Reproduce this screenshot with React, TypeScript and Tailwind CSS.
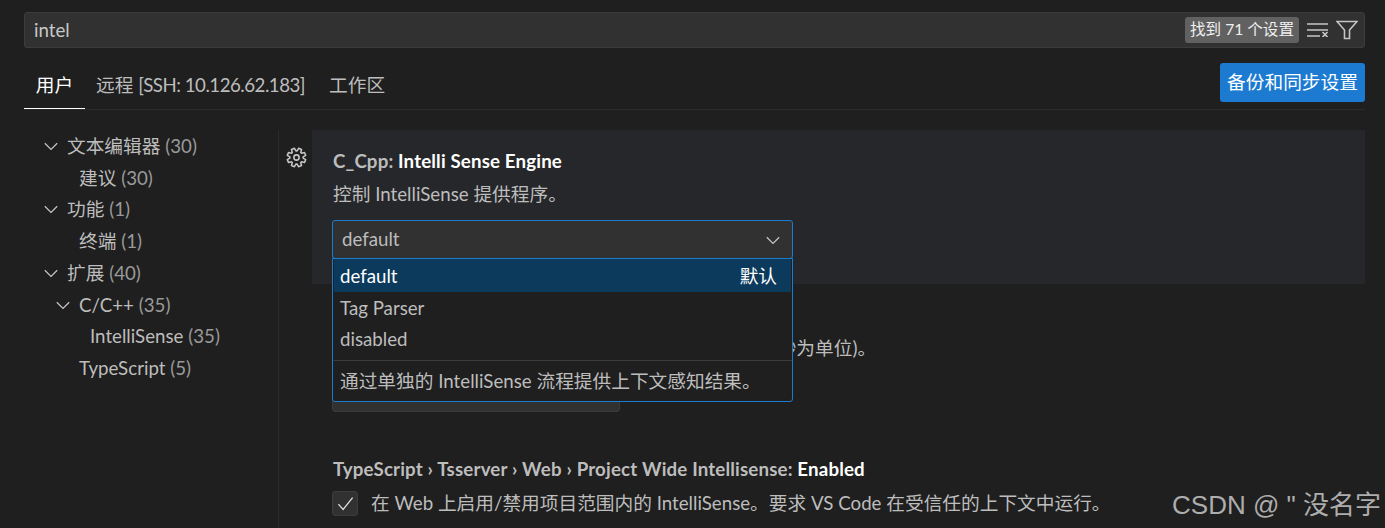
import React from 'react';

const font = "font-['Lato','Noto_Sans_CJK_SC',sans-serif]";

const tree = [
  { label: '文本编辑器', count: '(30)', depth: 0, open: true },
  { label: '建议', count: '(30)', depth: 1, open: false },
  { label: '功能', count: '(1)', depth: 0, open: true },
  { label: '终端', count: '(1)', depth: 1, open: false },
  { label: '扩展', count: '(40)', depth: 0, open: true },
  { label: 'C/C++', count: '(35)', depth: 1, open: true },
  { label: 'IntelliSense', count: '(35)', depth: 2, open: false },
  { label: 'TypeScript', count: '(5)', depth: 1, open: false },
];

const Chevron = ({ className }: { className?: string }) => (
  <svg viewBox="0 0 16 16" className={className} fill="none" stroke="currentColor" strokeWidth="1.1">
    <path d="M2.5 5.5 8 11l5.5-5.5" />
  </svg>
);

// eight lobed cog outline
const cogPath = () => {
  const pts: string[] = [];
  for (let i = 0; i < 8; i++) {
    const t = (i * Math.PI) / 4 + Math.PI / 8;
    const at = (r: number, d: number) => `${(12 + r * Math.cos(t + d)).toFixed(2)} ${(12 + r * Math.sin(t + d)).toFixed(2)}`;
    pts.push(`${i === 0 ? 'M' : 'L'}${at(7.6, -0.3)}`, `L${at(10.8, -0.17)}`, `L${at(10.8, 0.17)}`, `L${at(7.6, 0.3)}`);
  }
  return pts.join(' ') + ' Z';
};

const Gear = () => (
  <svg viewBox="0 0 24 24" className="w-[21px] h-[21px] text-[#c5c5c5]" fill="none" stroke="currentColor" strokeWidth="1.8" strokeLinejoin="round">
    <path d={cogPath()} />
    <circle cx="12" cy="12" r="3" />
  </svg>
);

const App: React.FC = () => {
  return (
    <div className={`relative w-[1385px] h-[528px] overflow-hidden bg-[#1f1f1f] text-[18.7px] text-[#bdbdbd] ${font}`}>
      <div className="pl-6 pr-5 pt-3">
        {/* search */}
        <div className="h-9 flex items-center justify-between bg-[#313131] border border-[#3c3c3c] rounded-[3px] pl-[9px] pr-[6px]">
          <span className="text-[#c8c8c8]">intel</span>
          <div className="flex items-center">
            <span className="h-[26px] flex items-center px-[5px] rounded-[3px] bg-[#616161] text-[#f0f0f0] text-[15.6px] whitespace-nowrap">找到 71 个设置</span>
            <svg viewBox="0 0 22 14" className="w-[22px] h-[14px] ml-2 text-[#c5c5c5]" fill="none" stroke="currentColor" strokeWidth="1.7">
              <path d="M0 1h21M0 7h21M0 13h13M15.5 9l5 5M20.5 9l-5 5" />
            </svg>
            <svg viewBox="0 0 22 20" className="w-[22px] h-[20px] ml-[7px] text-[#c5c5c5]" fill="none" stroke="currentColor" strokeWidth="1.6">
              <path d="M1 1.5h20l-7.5 8.5v8.5h-5V10z" />
            </svg>
          </div>
        </div>

        {/* tabs */}
        <div className="h-[50px] mt-[12px] flex items-start justify-between border-b border-[#2b2b2b]">
          <div className="flex h-[49px]">
            <div className="w-[61px] h-[49px] flex items-center justify-center border-b border-white text-white pt-[2px]">用户</div>
            <div className="ml-[11px] flex items-center pt-[2px] whitespace-nowrap">远程&nbsp;<span className="tracking-[-0.5px]">[SSH: 10.126.62.183]</span></div>
            <div className="ml-6 flex items-center pt-[2px]">工作区</div>
          </div>
          <button className="w-[145px] h-[39px] mt-[3px] bg-[#1c7bd1] rounded-[3px] text-white">备份和同步设置</button>
        </div>

        <div className="flex mt-5">
          {/* tree */}
          <div className="w-[255px] h-[400px] border-r border-[#2b2b2b] shrink-0">
            {tree.map((row) => (
              <div
                key={row.label}
                className={`h-[31.75px] flex items-center whitespace-nowrap ${row.depth === 0 ? 'pl-[43px]' : row.depth === 1 ? 'pl-[55px]' : 'pl-[66px]'}`}
              >
                <span className={row.open ? 'relative' : ''}>
                  {row.open && <Chevron className="absolute left-[-25px] top-[5px] w-[18px] h-[18px] text-[#c5c5c5]" />}
                  {row.label} <span className="text-[#9a9a9a]">{row.count}</span>
                </span>
              </div>
            ))}
          </div>

          {/* settings */}
          <div className="flex-1 min-w-0">
            <div className="relative ml-[33px] h-[154px] bg-[#26272a] pl-[20px] pt-[19px]">
              <div className="absolute left-[-26px] top-[17px]"><Gear /></div>
              <div className="font-bold leading-6 ml-[1px] tracking-[0.15px]"><span className="text-[#bdbdbd]">C_Cpp: </span><span className="text-white">Intelli Sense Engine</span></div>
              <div className="mt-[9px] leading-6 ml-[1px]">控制 IntelliSense 提供程序。</div>
              <div className="mt-[14px] w-[461px] h-[39px] flex items-center justify-between bg-[#313131] border border-[#1b7ccf] rounded-[3px] pl-[9px] pr-[10px]">
                <span>default</span>
                <Chevron className="w-[18px] h-[18px] text-[#c5c5c5]" />
              </div>
            </div>

            <div className="ml-[53px] h-[128px] relative">
              <div className="absolute left-[427px] top-[50px] whitespace-nowrap">以秒为单位)。</div>
              <div className="absolute left-0 top-[100px] w-[288px] h-[28px] bg-[#313131] border border-[#3c3c3c] rounded-[3px]" />
            </div>

            <div className="ml-[53px] mt-[45px]">
              <div className="font-bold leading-6 ml-[1px] tracking-[0.16px] whitespace-nowrap"><span className="text-[#bdbdbd]">TypeScript › Tsserver › Web › Project Wide Intellisense: </span><span className="text-white">Enabled</span></div>
              <div className="mt-[8px] flex items-center">
                <span className="w-[26px] h-[25px] flex items-center justify-center bg-[#313131] border border-[#3c3c3c] rounded-[3px] shrink-0">
                  <svg viewBox="0 0 16 16" className="w-[19px] h-[19px] text-[#e0e0e0]" fill="none" stroke="currentColor" strokeWidth="1.1"><path d="M2 8.5 6 13l8-10" /></svg>
                </span>
                <span className="ml-[13px] whitespace-nowrap">在 Web 上启用/禁用项目范围内的 IntelliSense。要求 VS Code 在受信任的上下文中运行。</span>
              </div>
            </div>
          </div>
        </div>
      </div>

      {/* dropdown list */}
      <div className="absolute left-[332px] top-[258px] w-[461px] h-[144px] bg-[#1f1f1f] border border-[#1b7ccf] rounded-b-[3px]">
        <div className="h-[33px] mx-[1px] pt-[1px] flex items-center justify-between bg-[#0b3a5c] text-white pl-[6px] pr-[14px]">
          <span>default</span><span>默认</span>
        </div>
        <div className="h-[32px] pl-[7px] flex items-center">Tag Parser</div>
        <div className="h-[31px] pl-[7px] flex items-center">disabled</div>
        <div className="border-t border-[#3c3c3c] mt-[5px] pl-[7px] h-[40px] pt-[1px] flex items-center whitespace-nowrap">通过单独的 IntelliSense 流程提供上下文感知结果。</div>
      </div>

      {/* watermark */}
      <div className="absolute right-[4px] bottom-[7px] text-[26px] leading-8 text-[#adadad] font-['Liberation_Sans','Noto_Sans_CJK_SC',sans-serif] whitespace-nowrap">CSDN @ " 没名字</div>
    </div>
  );
};

export default App;
